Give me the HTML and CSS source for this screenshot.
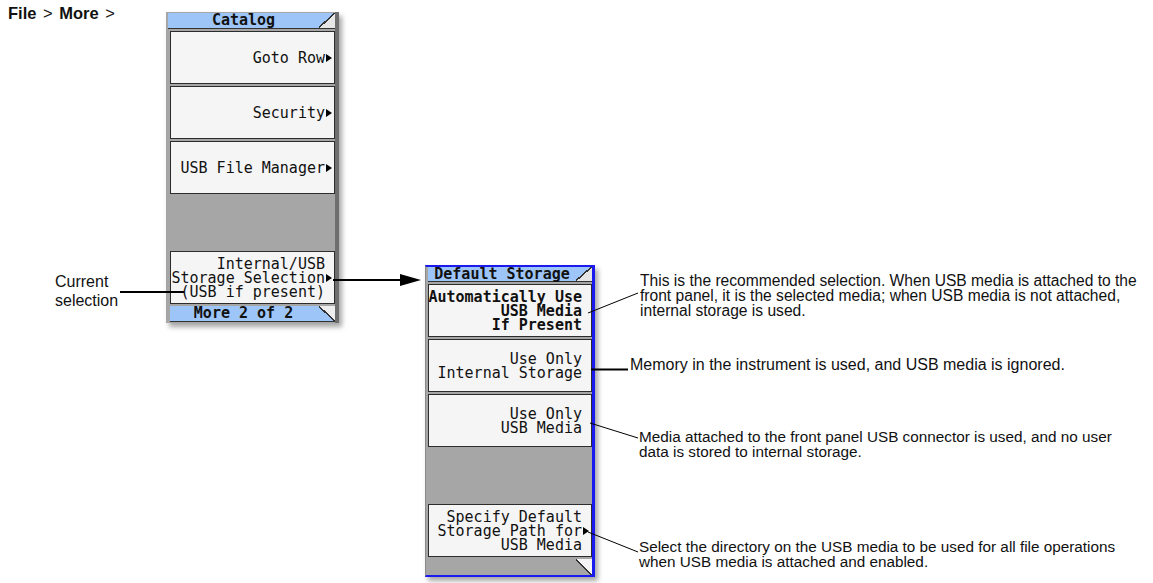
FILE: index.html
```html
<!DOCTYPE html>
<html lang="en">
<head>
  <meta charset="UTF-8" />
  <meta name="viewport" content="width=device-width, initial-scale=1.0"/>
  <title>Default Storage</title>
  <link rel="stylesheet" href="styles.css">
</head>
<body>
  <div class="diagram">
    <div class="path"><b>File</b> &gt; <b>More</b> &gt;</div>

    <div class="menu catalog">
      <div class="menu-title">Catalog</div>
      <div class="key"><span>Goto Row<i class="more"></i></span></div>
      <div class="key"><span>Security<i class="more"></i></span></div>
      <div class="key"><span>USB File Manager<i class="more"></i></span></div>
      <div class="key empty"></div>
      <div class="key"><span>Internal/USB<br>Storage Selection<i class="more"></i><br>(USB if present)</span></div>
      <div class="menu-foot">More 2 of 2</div>
    </div>

    <div class="menu storage">
      <div class="menu-title">Default Storage</div>
      <div class="key selected"><span>Automatically Use<br>USB Media<br>If Present</span></div>
      <div class="key"><span>Use Only<br>Internal Storage</span></div>
      <div class="key"><span>Use Only<br>USB Media</span></div>
      <div class="key empty"></div>
      <div class="key"><span>Specify Default<br>Storage Path for<i class="more"></i><br>USB Media</span></div>
      <div class="menu-foot blank"></div>
    </div>

    <div class="note current">Current<br>selection</div>
    <div class="note n1">This is the recommended selection. When USB media is attached to the<br>front panel, it is the selected media; when USB media is not attached,<br>internal storage is used.</div>
    <div class="note n2">Memory in the instrument is used, and USB media is ignored.</div>
    <div class="note n3">Media attached to the front panel USB connector is used, and no user<br>data is stored to internal storage.</div>
    <div class="note n4">Select the directory on the USB media to be used for all file operations<br>when USB media is attached and enabled.</div>

    <!-- leader lines -->
    <svg class="leaders" width="1153" height="583" viewBox="0 0 1153 583">
      <g stroke="#000" fill="none">
        <line x1="120" y1="292" x2="184" y2="292" stroke-width="2"/>
        <line x1="333" y1="280" x2="402" y2="280" stroke-width="2"/>
        <line x1="588" y1="313" x2="638" y2="293" stroke-width="1"/>
        <line x1="591" y1="369.5" x2="628" y2="369.5" stroke-width="2"/>
        <line x1="590" y1="423" x2="638" y2="438" stroke-width="1"/>
        <line x1="588" y1="532" x2="638" y2="552" stroke-width="1"/>
      </g>
      <polygon points="400,274 421,280 400,286" fill="#000"/>
    </svg>
  </div>
</body>
</html>
```

FILE: styles.css
```css
body {
  margin: 0;
  background: #fff;
  font-family: "Liberation Sans", Arial, sans-serif;
  color: #111;
}
.diagram {
  position: relative;
  width: 1153px;
  height: 583px;
  overflow: hidden;
}
.path {
  position: absolute;
  left: 8px;
  top: 4px;
  font-size: 16.5px;
  word-spacing: 2px;
}

/* instrument softkey menus */
.menu {
  position: absolute;
  display: flex;
  flex-direction: column;
  gap: 2px;
  background: #a6a6a6;
  box-shadow: 3px 4px 5px rgba(0, 0, 0, 0.35);
  font-family: "DejaVu Sans Mono", monospace;
  font-size: 15px;
  line-height: 14px;
  color: #111;
}
.catalog {
  left: 166px;
  top: 12px;
  width: 165px;
  padding: 1px 0 1px 4px;
  border-right: 4px solid #6e6e6e;
}
.storage {
  left: 425px;
  top: 265px;
  width: 164px;
  padding-left: 2px;
  border: 2px solid #1a1af0;
  border-left: 1px solid #8a8a8a;
  border-right-width: 3px;
}
.menu-title {
  height: 16px;
  box-sizing: border-box;
  border-bottom: 1px solid #333;
  background: linear-gradient(to bottom right, transparent calc(50% - 1px), #333 calc(50% - 1px), #333 calc(50% + 0.5px), #e6e6e6 calc(50% + 0.5px)) right top / 16px 100% no-repeat, #9ec5f7;
  font-weight: bold;
  line-height: 15px;
  text-align: center;
  padding-right: 16px;
  white-space: nowrap;
}
.catalog .menu-title {
  margin-left: -2px;
}
.storage .menu-title {
  height: 15px;
  line-height: 14px;
}
.key {
  height: 53px;
  box-sizing: border-box;
  background: #f5f5f5;
  border: 1px solid #2c2c2c;
  display: flex;
  align-items: center;
  justify-content: flex-end;
  text-align: right;
  padding-right: 9px;
  white-space: nowrap;
}
.key.empty {
  background: none;
  border: 0;
}
.key.selected {
  font-weight: bold;
}
.more {
  display: inline-block;
  width: 0;
  height: 0;
  border-left: 6px solid #000;
  border-top: 4px solid transparent;
  border-bottom: 4px solid transparent;
  margin-left: 1px;
  margin-right: -7px;
  vertical-align: 1px;
}
.menu-foot {
  height: 16px;
  box-sizing: border-box;
  border-bottom: 1px solid #333;
  background: linear-gradient(to top right, transparent calc(50% - 1px), #333 calc(50% - 1px), #333 calc(50% + 0.5px), #eee calc(50% + 0.5px)) right top / 16px 100% no-repeat, #9ec5f7;
  font-weight: bold;
  line-height: 15px;
  text-align: center;
  padding-right: 18px;
}
.menu-foot.blank {
  border-bottom: 0;
  background: linear-gradient(to top right, transparent calc(50% - 1px), #333 calc(50% - 1px), #333 calc(50% + 0.5px), #f5f5f5 calc(50% + 0.5px)) right top / 16px 100% no-repeat;
}

/* callout text */
.note {
  position: absolute;
  font-size: 15.5px;
  line-height: 15px;
  white-space: nowrap;
}
.current {
  left: 55px;
  top: 272px;
  font-size: 16px;
  line-height: 19px;
}
.n1 { left: 640px; top: 273px; font-size: 15.6px; }
.n2 { left: 630px; top: 357px; font-size: 16px; }
.n3 { left: 639px; top: 429px; font-size: 15.3px; }
.n4 { left: 639px; top: 539px; font-size: 15.3px; }

.leaders {
  position: absolute;
  left: 0;
  top: 0;
  pointer-events: none;
}
```
